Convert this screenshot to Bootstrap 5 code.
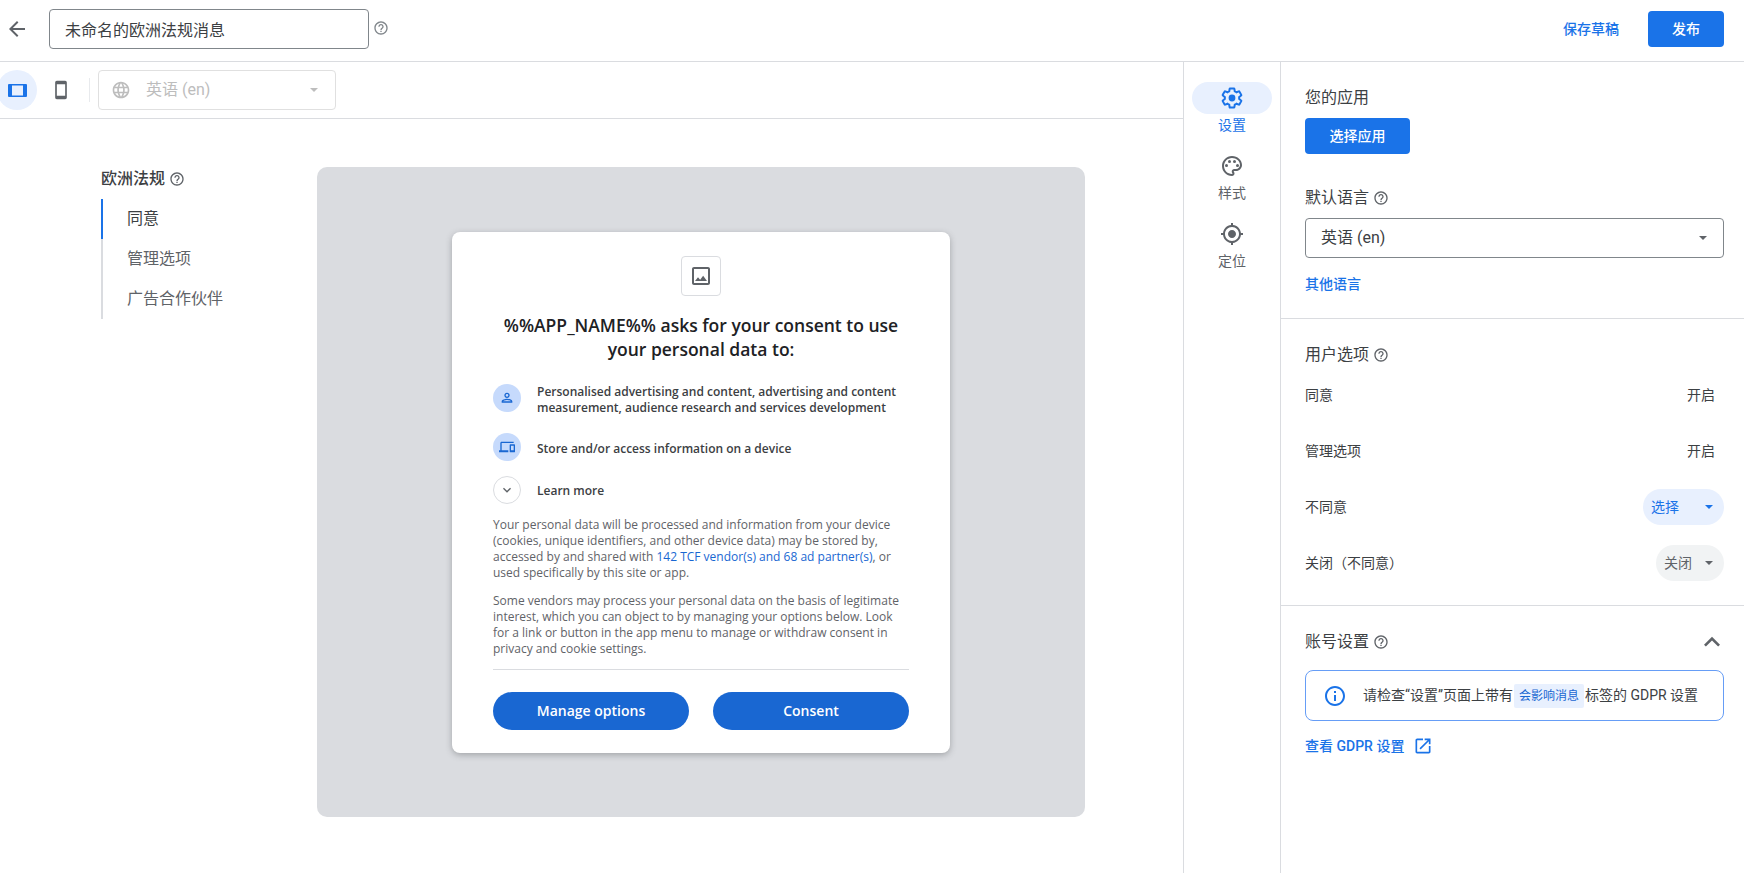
<!doctype html>
<html lang="zh-CN">
<head>
    <meta charset="utf-8">
    <meta name="viewport" content="width=device-width, initial-scale=1">
    <title>未命名的欧洲法规消息</title>
    <link href="https://cdn.jsdelivr.net/npm/bootstrap@5.3.3/dist/css/bootstrap.min.css" rel="stylesheet">
    <style>
        html, body { height: 100%; }
        body {
            font-family: Roboto, "Noto Sans CJK SC", sans-serif;
            font-size: 14px;
            color: #3c4043;
            background: #fff;
            overflow: hidden;
        }
        svg { display: block; flex: none; fill: currentColor; }
        .app-head { height: 62px; border-bottom: 1px solid #dadce0; padding: 0 20px 3px 5px; }
        .back-btn { margin-right: 20px; color: #5f6368; }
        .title-input.form-control {
            width: 320px; height: 40px; padding: 0 15px;
            font-size: 16px; color: #3c4043;
            border: 1px solid #80868b; border-radius: 4px; box-shadow: none;
        }
        .hint-icon { color: #5f6368; }
        .head-hint { color: #80868b; margin: 0 0 2px 4px; }
        .save-link { font-weight: 500; color: #1a73e8; text-decoration: none; margin-right: 29px; }
        .blue-btn.btn {
            background: #1a73e8; border: 0; color: #fff;
            font-size: 14px; font-weight: 500; border-radius: 4px;
        }
        .publish-btn.btn { width: 76px; height: 36px; padding: 0; }
        .app-btn.btn { width: 105px; height: 36px; padding: 0; }

        .page-main { height: calc(100% - 62px); }
        .left-pane { width: 1184px; border-right: 1px solid #dadce0; }
        .tool-bar { height: 57px; border-bottom: 1px solid #dadce0; }
        .view-on { width: 40px; height: 40px; margin-left: -3px; border-radius: 50%; background: #e8f0fe; color: #1a73e8; }
        .view-off { width: 40px; height: 40px; margin-left: 4px; color: #5f6368; }
        .tool-sep { width: 1px; height: 24px; background: #e8eaed; margin: 0 8px; }
        .lang-off {
            width: 238px; height: 40px; padding: 0 17px 0 12px;
            border: 1px solid #e0e0e0; border-radius: 4px;
            font-size: 16px; color: #bdbdbd;
        }
        .lang-off-name { margin-left: 15px; }
        .caret { width: 0; height: 0; border-left: 4px solid transparent; border-right: 4px solid transparent; border-top: 4px solid #5f6368; }
        .lang-off .caret { border-top-color: #bdbdbd; }

        .work-area { padding: 48px 0 0 101px; }
        .side-menu { width: 216px; }
        .menu-title { font-size: 16px; font-weight: 500; line-height: 24px; height: 24px; margin-bottom: 8px; color: #3c4043; }
        .menu-list { border-left: 2px solid #dadce0; }
        .menu-item { height: 40px; line-height: 40px; padding-left: 24px; font-size: 16px; color: #5f6368; margin-left: -2px; border-left: 2px solid transparent; white-space: nowrap; }
        .menu-on { border-left-color: #1a73e8; color: #3c4043; }

        .preview-bg {
            width: 768px; height: 650px;
            background: #dadce0; border-radius: 10px;
        }
        .consent-box {
            width: 498px; height: 521px; padding: 24px 41px 0;
            background: #fff; border-radius: 8px;
            box-shadow: 0 2px 6px rgba(60, 64, 67, .35);
            font-family: "Open Sans", sans-serif;
        }
        .logo-box { width: 40px; height: 40px; margin: 0 auto 17px; border: 1px solid #dadce0; border-radius: 4px; color: #5f6368; }
        .consent-title { font-size: 17.5px; font-weight: 600; line-height: 24px; color: #202124; text-align: center; margin: 0 0 19px; }
        .purpose-row { display: flex; align-items: center; gap: 16px; font-size: 12px; font-weight: 600; line-height: 16px; color: #3c4043; }
        .purpose-txt { padding-top: 4px; }
        .row-one { margin-bottom: 17px; }
        .row-two { margin-bottom: 15px; }
        .row-three { margin-bottom: 13px; }
        .row-three .purpose-txt { padding-top: 2px; }
        .purpose-ico { width: 28px; height: 28px; border-radius: 50%; background: #c6dafc; color: #1967d2; flex: none; }
        .more-ico { background: #fff; border: 1px solid #dadce0; color: #5f6368; }
        .consent-text { font-size: 12px; line-height: 16px; color: #5f6368; margin: 0 0 12px; }
        .consent-text a { color: #1967d2; text-decoration: none; }
        .consent-foot { border-top: 1px solid #dadce0; margin-top: 12px; padding-top: 22px; gap: 24px; }
        .consent-btn.btn {
            flex: 1; height: 38px; padding: 0; border: 0; border-radius: 19px;
            background: #1967d2; color: #fff;
            font-family: "Open Sans", sans-serif; font-size: 14px; font-weight: 600;
        }

        .tab-rail { width: 97px; border-right: 1px solid #dadce0; padding-top: 20px; }
        .tab-item { height: 68px; color: #5f6368; font-size: 14px; line-height: 20px; }
        .tab-pill { width: 80px; height: 32px; margin-bottom: 1px; border-radius: 16px; }
        .tab-on { color: #1a73e8; }
        .tab-on .tab-pill { background: #e8f0fe; }

        .set-pane { flex: 1; }
        .set-block { padding: 24px 20px 0 24px; border-bottom: 1px solid #dadce0; }
        .block-app { height: 257px; }
        .block-opts { height: 287px; }
        .block-account { padding: 24px 20px 0 24px; }
        .set-head { font-size: 16px; font-weight: 400; line-height: 24px; color: #3c4043; margin: 0; }
        .lang-box {
            height: 40px; padding: 0 16px 0 15px; margin-top: 8px;
            border: 1px solid #80868b; border-radius: 4px; font-size: 16px;
        }
        .more-lang { display: block; font-weight: 500; line-height: 20px; color: #1a73e8; text-decoration: none; margin-top: 16px; }
        .opt-row { height: 56px; }
        .opt-val { margin-right: 9px; }
        .opt-pill { height: 36px; border-radius: 18px; padding: 0 11px 0 8px; }
        .pill-blue { width: 81px; background: #e8f0fe; color: #1a73e8; }
        .pill-blue .caret { border-top-color: #1a73e8; }
        .pill-grey { width: 68px; background: #f1f3f4; color: #5f6368; }
        .fold-btn { margin: -4px -4px -4px 0; color: #5f6368; }
        .notice-box {
            height: 51px; margin-top: 16px; padding: 0 0 0 17px;
            border: 1px solid #669df6; border-radius: 8px; color: #3c4043;
        }
        .notice-ico { color: #1a73e8; }
        .notice-tag { display: inline-block; height: 24px; padding: 0 5px; margin: 0 1px; background: #e8f0fe; border-radius: 2px; color: #1967d2; font-size: 12px; line-height: 24px; }
        .gdpr-link { font-weight: 500; color: #1a73e8; text-decoration: none; line-height: 20px; margin-top: 15px; gap: 9px; }
    </style>
</head>
<body>
    <svg width="0" height="0" class="position-absolute">
        <symbol id="i-help" viewBox="0 0 24 24"><path d="M11 18h2v-2h-2v2zm1-16C6.48 2 2 6.48 2 12s4.48 10 10 10 10-4.48 10-10S17.52 2 12 2zm0 18c-4.41 0-8-3.59-8-8s3.59-8 8-8 8 3.59 8 8-3.59 8-8 8zm0-14c-2.21 0-4 1.79-4 4h2c0-1.1.9-2 2-2s2 .9 2 2c0 2-3 1.75-3 5h2c0-2.25 3-2.5 3-5 0-2.21-1.79-4-4-4z"/></symbol>
    </svg>

    <!-- Top bar -->
    <header class="app-head d-flex align-items-center">
        <svg class="back-btn" width="24" height="24" viewBox="0 0 24 24"><path d="M20 11H7.83l5.59-5.59L12 4l-8 8 8 8 1.41-1.41L7.83 13H20v-2z"/></svg>
        <input class="title-input form-control" type="text" value="未命名的欧洲法规消息">
        <svg class="head-hint" width="16" height="16"><use href="#i-help"/></svg>
        <a class="save-link ms-auto" href="#">保存草稿</a>
        <button class="blue-btn publish-btn btn" type="button">发布</button>
    </header>

    <div class="page-main d-flex">
        <!-- Preview -->
        <div class="left-pane">
            <div class="tool-bar d-flex align-items-center">
                <span class="view-on d-flex align-items-center justify-content-center">
                    <svg width="24" height="24" viewBox="0 0 24 24"><path fill-rule="evenodd" d="M4 6h17a1 1 0 0 1 1 1v11a1 1 0 0 1-1 1H4a1 1 0 0 1-1-1V7a1 1 0 0 1 1-1zm3 1.5v10h11v-10H7z"/></svg>
                </span>
                <span class="view-off d-flex align-items-center justify-content-center">
                    <svg width="20" height="20" viewBox="0 0 24 24"><path d="M17 1.01L7 1c-1.1 0-2 .9-2 2v18c0 1.1.9 2 2 2h10c1.1 0 2-.9 2-2V3c0-1.1-.9-1.99-2-1.99zM17 19H7V5h10v14z"/></svg>
                </span>
                <span class="tool-sep"></span>
                <div class="lang-off d-flex align-items-center">
                    <svg width="20" height="20" viewBox="0 0 24 24"><path d="M11.99 2C6.47 2 2 6.48 2 12s4.47 10 9.99 10C17.52 22 22 17.52 22 12S17.52 2 11.99 2zm6.93 6h-2.95c-.32-1.25-.78-2.45-1.38-3.56 1.84.63 3.37 1.91 4.33 3.56zM12 4.04c.83 1.2 1.48 2.53 1.91 3.96h-3.82c.43-1.43 1.08-2.76 1.91-3.96zM4.26 14C4.1 13.36 4 12.69 4 12s.1-1.36.26-2h3.38c-.08.66-.14 1.32-.14 2 0 .68.06 1.34.14 2H4.26zm.82 2h2.95c.32 1.25.78 2.45 1.38 3.56-1.84-.63-3.37-1.9-4.33-3.56zm2.95-8H5.08c.96-1.66 2.49-2.93 4.33-3.56C8.81 5.55 8.35 6.75 8.03 8zM12 19.96c-.83-1.2-1.48-2.53-1.91-3.96h3.82c-.43 1.43-1.08 2.76-1.91 3.96zM14.34 14H9.66c-.09-.66-.16-1.32-.16-2 0-.68.07-1.35.16-2h4.68c.09.65.16 1.32.16 2 0 .68-.07 1.34-.16 2zm.25 5.56c.6-1.11 1.06-2.31 1.38-3.56h2.95c-.96 1.65-2.49 2.93-4.33 3.56zM16.36 14c.08-.66.14-1.32.14-2 0-.68-.06-1.34-.14-2h3.38c.16.64.26 1.31.26 2s-.1 1.36-.26 2h-3.38z"/></svg>
                    <span class="lang-off-name">英语 (en)</span>
                    <span class="caret ms-auto"></span>
                </div>
            </div>

            <div class="work-area d-flex">
                <div class="side-menu">
                    <div class="menu-title d-flex align-items-center gap-1">欧洲法规 <svg class="hint-icon" width="16" height="16"><use href="#i-help"/></svg></div>
                    <div class="menu-list">
                        <div class="menu-item menu-on">同意</div>
                        <div class="menu-item">管理选项</div>
                        <div class="menu-item">广告合作伙伴</div>
                    </div>
                </div>

                <div class="preview-bg d-flex align-items-center justify-content-center">
                    <div class="consent-box">
                        <div class="logo-box d-flex align-items-center justify-content-center">
                            <svg width="24" height="24" viewBox="0 0 24 24"><path d="M19 5v14H5V5h14m0-2H5c-1.1 0-2 .9-2 2v14c0 1.1.9 2 2 2h14c1.1 0 2-.9 2-2V5c0-1.1-.9-2-2-2zm-4.86 8.86l-3 3.87L9 13.14 6 17h12l-3.86-5.14z"/></svg>
                        </div>
                        <h1 class="consent-title">%%APP_NAME%% asks for your consent to use your personal data to:</h1>
                        <div class="purpose-row row-one">
                            <span class="purpose-ico d-flex align-items-center justify-content-center">
                                <svg width="16" height="16" viewBox="0 0 24 24"><path d="M12 6c1.1 0 2 .9 2 2s-.9 2-2 2-2-.9-2-2 .9-2 2-2m0 9c2.7 0 5.8 1.29 6 2H6c.23-.72 3.31-2 6-2m0-11C9.79 4 8 5.79 8 8s1.79 4 4 4 4-1.79 4-4-1.79-4-4-4zm0 9c-2.67 0-8 1.34-8 4v2h16v-2c0-2.66-5.33-4-8-4z"/></svg>
                            </span>
                            <span class="purpose-txt">Personalised advertising and content, advertising and content measurement, audience research and services development</span>
                        </div>
                        <div class="purpose-row row-two">
                            <span class="purpose-ico d-flex align-items-center justify-content-center">
                                <svg width="16" height="16" viewBox="0 0 24 24"><path d="M4 6h18V4H4c-1.1 0-2 .9-2 2v11H0v3h14v-3H4V6zm19 2h-6c-.55 0-1 .45-1 1v10c0 .55.45 1 1 1h6c.55 0 1-.45 1-1V9c0-.55-.45-1-1-1zm-1 9h-4v-7h4v7z"/></svg>
                            </span>
                            <span class="purpose-txt">Store and/or access information on a device</span>
                        </div>
                        <div class="purpose-row row-three">
                            <span class="purpose-ico more-ico d-flex align-items-center justify-content-center">
                                <svg width="16" height="16" viewBox="0 0 24 24"><path d="M16.59 8.59L12 13.17 7.41 8.59 6 10l6 6 6-6z"/></svg>
                            </span>
                            <span class="purpose-txt">Learn more</span>
                        </div>
                        <p class="consent-text">Your personal data will be processed and information from your device (cookies, unique identifiers, and other device data) may be stored by, accessed by and shared with <a href="#">142 TCF vendor(s) and 68 ad partner(s)</a>, or used specifically by this site or app.</p>
                        <p class="consent-text mb-0">Some vendors may process your personal data on the basis of legitimate interest, which you can object to by managing your options below. Look for a link or button in the app menu to manage or withdraw consent in privacy and cookie settings.</p>
                        <div class="consent-foot d-flex">
                            <button class="consent-btn btn" type="button">Manage options</button>
                            <button class="consent-btn btn" type="button">Consent</button>
                        </div>
                    </div>
                </div>
            </div>
        </div>

        <!-- Tabs -->
        <nav class="tab-rail">
            <div class="tab-item tab-on d-flex flex-column align-items-center">
                <span class="tab-pill d-flex align-items-center justify-content-center">
                    <svg width="24" height="24" viewBox="0 0 24 24"><path d="M19.14 12.94c.04-.3.06-.61.06-.94 0-.32-.02-.64-.07-.94l2.03-1.58c.18-.14.23-.41.12-.61l-1.92-3.32c-.12-.22-.37-.29-.59-.22l-2.39.96c-.5-.38-1.03-.7-1.62-.94l-.36-2.54c-.04-.24-.24-.41-.48-.41h-3.84c-.24 0-.43.17-.47.41l-.36 2.54c-.59.24-1.13.57-1.62.94l-2.39-.96c-.22-.08-.47 0-.59.22L2.74 8.87c-.12.21-.08.47.12.61l2.03 1.58c-.05.3-.09.63-.09.94s.02.64.07.94l-2.03 1.58c-.18.14-.23.41-.12.61l1.92 3.32c.12.22.37.29.59.22l2.39-.96c.5.38 1.03.7 1.62.94l.36 2.54c.05.24.24.41.48.41h3.84c.24 0 .44-.17.47-.41l.36-2.54c.59-.24 1.13-.56 1.62-.94l2.39.96c.22.08.47 0 .59-.22l1.92-3.32c.12-.22.07-.47-.12-.61l-2.01-1.58z" fill="none" stroke="currentColor" stroke-width="2"/><circle cx="12" cy="12" r="3.4"/></svg>
                </span>
                <span>设置</span>
            </div>
            <div class="tab-item d-flex flex-column align-items-center">
                <span class="tab-pill d-flex align-items-center justify-content-center">
                    <svg width="24" height="24" viewBox="0 0 24 24"><path d="M12 22C6.49 22 2 17.51 2 12S6.49 2 12 2s10 4.04 10 9c0 3.31-2.69 6-6 6h-1.77c-.28 0-.5.22-.5.5 0 .12.05.23.13.33.41.47.64 1.06.64 1.67 0 1.38-1.12 2.5-2.5 2.5zm0-18c-4.41 0-8 3.59-8 8s3.59 8 8 8c.28 0 .5-.22.5-.5 0-.16-.08-.28-.14-.35-.41-.46-.63-1.05-.63-1.65 0-1.38 1.12-2.5 2.5-2.5H16c2.21 0 4-1.79 4-4 0-3.86-3.59-7-8-7z"/><circle cx="6.5" cy="11.5" r="1.5"/><circle cx="9.5" cy="7.5" r="1.5"/><circle cx="14.5" cy="7.5" r="1.5"/><circle cx="17.5" cy="11.5" r="1.5"/></svg>
                </span>
                <span>样式</span>
            </div>
            <div class="tab-item d-flex flex-column align-items-center">
                <span class="tab-pill d-flex align-items-center justify-content-center">
                    <svg width="24" height="24" viewBox="0 0 24 24"><path d="M12 8c-2.21 0-4 1.79-4 4s1.79 4 4 4 4-1.79 4-4-1.79-4-4-4zm8.94 3c-.46-4.17-3.77-7.48-7.94-7.94V1h-2v2.06C6.83 3.52 3.52 6.83 3.06 11H1v2h2.06c.46 4.17 3.77 7.48 7.94 7.94V23h2v-2.06c4.17-.46 7.48-3.77 7.94-7.94H23v-2h-2.06zM12 19c-3.87 0-7-3.13-7-7s3.13-7 7-7 7 3.13 7 7-3.13 7-7 7z"/></svg>
                </span>
                <span>定位</span>
            </div>
        </nav>

        <!-- Settings -->
        <aside class="set-pane">
            <section class="set-block block-app">
                <h2 class="set-head">您的应用</h2>
                <button class="blue-btn app-btn btn mt-2" type="button">选择应用</button>
                <h2 class="set-head d-flex align-items-center gap-1 mt-4 pt-2">默认语言 <svg class="hint-icon" width="16" height="16"><use href="#i-help"/></svg></h2>
                <div class="lang-box d-flex align-items-center">英语 (en)<span class="caret ms-auto"></span></div>
                <a class="more-lang" href="#">其他语言</a>
            </section>
            <section class="set-block block-opts">
                <h2 class="set-head d-flex align-items-center gap-1">用户选项 <svg class="hint-icon" width="16" height="16"><use href="#i-help"/></svg></h2>
                <div class="opt-row d-flex align-items-center justify-content-between"><span>同意</span><span class="opt-val">开启</span></div>
                <div class="opt-row d-flex align-items-center justify-content-between"><span>管理选项</span><span class="opt-val">开启</span></div>
                <div class="opt-row d-flex align-items-center justify-content-between"><span>不同意</span><span class="opt-pill pill-blue d-flex align-items-center justify-content-between">选择<span class="caret"></span></span></div>
                <div class="opt-row d-flex align-items-center justify-content-between"><span>关闭（不同意）</span><span class="opt-pill pill-grey d-flex align-items-center justify-content-between">关闭<span class="caret"></span></span></div>
            </section>
            <section class="block-account">
                <div class="d-flex align-items-center justify-content-between">
                    <h2 class="set-head d-flex align-items-center gap-1">账号设置 <svg class="hint-icon" width="16" height="16"><use href="#i-help"/></svg></h2>
                    <svg class="fold-btn" width="32" height="32" viewBox="0 0 24 24"><path d="M12 8l-6 6 1.41 1.41L12 10.83l4.59 4.58L18 14z"/></svg>
                </div>
                <div class="notice-box d-flex align-items-center gap-3">
                    <svg class="notice-ico" width="24" height="24" viewBox="0 0 24 24"><path d="M11 7h2v2h-2zm0 4h2v6h-2zm1-9C6.48 2 2 6.48 2 12s4.48 10 10 10 10-4.48 10-10S17.52 2 12 2zm0 18c-4.41 0-8-3.59-8-8s3.59-8 8-8 8 3.59 8 8-3.59 8-8 8z"/></svg>
                    <span class="text-nowrap">请检查“设置”页面上带有<span class="notice-tag">会影响消息</span>标签的 GDPR 设置</span>
                </div>
                <a class="gdpr-link d-flex align-items-center" href="#">查看 GDPR 设置 <svg width="20" height="20" viewBox="0 0 24 24"><path d="M19 19H5V5h7V3H5c-1.11 0-2 .9-2 2v14c0 1.1.89 2 2 2h14c1.1 0 2-.9 2-2v-7h-2v7zM14 3v2h3.59l-9.83 9.83 1.41 1.41L19 6.41V10h2V3h-7z"/></svg></a>
            </section>
        </aside>
    </div>

    <script src="https://cdn.jsdelivr.net/npm/bootstrap@5.3.3/dist/js/bootstrap.bundle.min.js"></script>
</body>
</html>
